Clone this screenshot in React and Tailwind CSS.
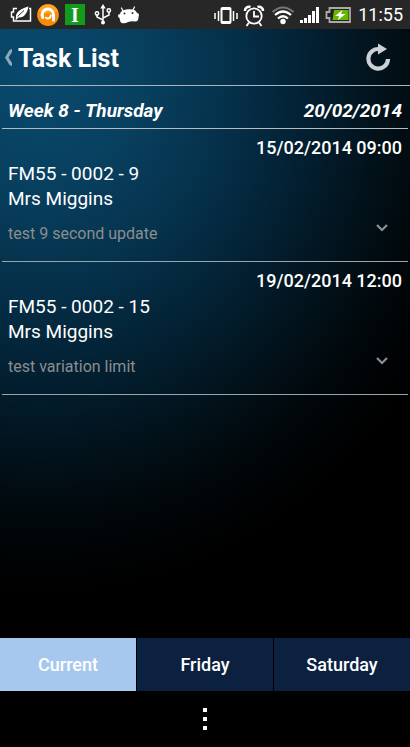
const tasks = [
  { due: "15/02/2014 09:00", ref: "FM55 - 0002 - 9", name: "Mrs Miggins", note: "test 9 second update" },
  { due: "19/02/2014 12:00", ref: "FM55 - 0002 - 15", name: "Mrs Miggins", note: "test variation limit" },
];

function StatusBar() {
  return (
    <div className="flex h-[29px] items-center justify-between bg-[#272727] pl-[9px] pr-[7px] text-white">
      <div className="flex items-center gap-[5px]">
        <svg width="23" height="22" viewBox="0 0 23 22" aria-hidden="true">
          <path d="M8 4.500H4.500V8H2.500V13H4.500V17H21.500V4.500H20" fill="none" stroke="currentColor" strokeWidth="1.500" />
          <path d="M7 13.500C6.500 9 10 5 19.500 2.500C18.500 9 15 14 9.500 13.500L6.500 16.500Z" fill="currentColor" />
          <path d="M8.500 12.500L15 6.500" stroke="#272727" strokeWidth="1" />
        </svg>
        <svg width="22" height="24" viewBox="0 0 22 24" aria-hidden="true">
          <circle cx="11" cy="12" r="10.900" fill="#f98a08" />
          <path d="M1 8A10.900 10.900 0 0 1 21 8Q11 13 1 8Z" fill="#ffa322" />
          <path d="M5.800 14.500A5.700 5.700 0 1 1 16.500 11.500V17" fill="none" stroke="#fff" strokeWidth="3" strokeLinecap="round" />
          <path d="M9 14.800A3 3 0 0 0 13.800 12.500" stroke="#fff" strokeWidth="2" fill="none" strokeLinecap="round" />
        </svg>
        <span className="ml-px flex h-[21px] w-5 items-center justify-center bg-[#159b1c] font-['Liberation_Serif',serif] text-xl leading-5 font-bold">I</span>
        <svg className="ml-1" width="18" height="22" viewBox="0 0 18 22" aria-hidden="true" fill="none" stroke="currentColor" strokeWidth="1.500">
          <path d="M9 4V18M9 16L3 13V10M9 14L15 11V7.500" />
          <path d="M9 0L6.300 4.500H11.700Z" fill="currentColor" stroke="none" />
          <circle cx="9" cy="18.500" r="2" fill="currentColor" stroke="none" />
          <circle cx="3" cy="9.500" r="1.700" />
          <circle cx="14.800" cy="6.500" r="1.700" />
        </svg>
        <svg width="23" height="20" viewBox="0 0 23 20" aria-hidden="true">
          <path d="M4.500 3L6 6M17.500 2L16 5" stroke="currentColor" strokeWidth="1.200" strokeLinecap="round" />
          <path d="M3 9C4 5.500 7 4.800 11 4.300C16 4 19 5 19.800 7.800C22 8 22.500 10 21.500 12C21.500 15 20.500 16.500 18 16.500Q14 16 11 17Q8 19 4.500 18C3 17 3 15 2.500 13C0.500 12 0.500 9 3 9Z" fill="currentColor" />
          <circle cx="7.500" cy="8.500" r="1" fill="#333" />
          <circle cx="15.500" cy="8" r="1" fill="#333" />
        </svg>
      </div>
      <div className="flex items-center gap-[5px]">
        <svg width="24" height="20" viewBox="0 0 24 20" aria-hidden="true" fill="none" stroke="currentColor">
          <rect x="7.500" y="3" width="9" height="15" rx="1" strokeWidth="2" />
          <path d="M8 4H16M8 17H16" strokeWidth="2" />
          <path d="M4.500 6V16M19.500 6V16M1 8V14M23 8V14" strokeWidth="1.500" />
        </svg>
        <svg width="22" height="24" viewBox="0 0 22 24" aria-hidden="true" fill="none" stroke="currentColor" strokeWidth="1.800">
          <circle cx="11" cy="13" r="7.700" />
          <path d="M11 8V13.500H16M6 19.500L3.500 23M16 19.500L18.500 23" />
          <path d="M2 8A4 4 0 0 1 7.500 4M14.500 4A4 4 0 0 1 20 8" strokeWidth="2.500" />
        </svg>
        <svg className="ml-px" width="24" height="20" viewBox="0 0 24 20" aria-hidden="true" fill="none" stroke="currentColor" strokeWidth="2">
          <path d="M1.500 7Q12 -2 22.500 7" stroke="#777" />
          <path d="M4 10Q12 3 20 10M7 13.500Q12 9 17 13.500" strokeWidth="2.300" />
          <circle cx="12" cy="16.500" r="2.700" fill="currentColor" stroke="none" />
        </svg>
        <svg width="20" height="18" viewBox="0 0 20 18" aria-hidden="true" fill="currentColor">
          <path d="M0 14H3V17H0ZM4 12H7V17H4ZM8 9H11V17H8ZM12 5H15V17H12ZM16 1H19V17H16Z" />
        </svg>
        <svg width="26" height="18" viewBox="0 0 26 18" aria-hidden="true">
          <path d="M4.500 2H25V16H4.500V12H1.500V6H4.500Z" fill="#222" stroke="#aaa" strokeWidth="1.800" />
          <path d="M9 4H23.500V14H7.500Z" fill="#65b700" />
          <path d="M17.500 4L10 10H14L13 14L20.500 8H16Z" fill="#fff" />
        </svg>
        <span className="ml-0.5 text-lg leading-6">11:55</span>
      </div>
    </div>
  );
}

function Task({ task }) {
  return (
    <li className="mx-0.5 border-b border-[#9aa5aa] px-1.5 pt-1.5 pb-[15px]">
      <div className="text-right text-lg leading-[26px] font-medium">{task.due}</div>
      <div className="text-[19px] leading-[25px]">{task.ref}</div>
      <div className="text-[19px] leading-[25px]">{task.name}</div>
      <div className="mt-2.5 flex items-center justify-between">
        <span className="text-base leading-[25px] text-[#8b8e90]">{task.note}</span>
        <button type="button" aria-label={`Expand ${task.ref}`} className="mr-3.5 mb-3 flex h-3 w-3 items-center justify-center text-[#8a9196]">
          <svg width="12" height="8" viewBox="0 0 12 8" aria-hidden="true">
            <path d="M1 1L6 6L11 1" fill="none" stroke="currentColor" strokeWidth="2.200" />
          </svg>
        </button>
      </div>
    </li>
  );
}

export default function App() {
  return (
    <div className="flex min-h-screen flex-col bg-black font-['Roboto',sans-serif] text-white">
      <StatusBar />
      <div className="flex flex-1 flex-col bg-[radial-gradient(ellipse_460px_520px_at_40px_40px,#094a6e_0%,#08405f_22%,#05304a_42%,#032133_58%,#02121b_74%,#01070a_87%,#000_100%)]">
        <header className="flex h-[57px] items-center justify-between border-b border-[#a9b5be] pr-[18px] pl-1">
          <div className="flex items-center gap-1.5">
            <button type="button" aria-label="Back" className="text-[#8fa9ba]">
              <svg width="8" height="17" viewBox="0 0 8 17" aria-hidden="true">
                <path d="M8 0V3L4.500 8.500L8 14V17L5.500 16L1 8.500L5.500 1Z" fill="currentColor" />
              </svg>
            </button>
            <h1 className="pt-1 text-[25px] leading-8 font-bold">Task List</h1>
          </div>
          <button type="button" aria-label="Refresh" className="text-[#cdd0d5]">
            <svg width="28" height="28" viewBox="0 0 28 28" aria-hidden="true">
              <path d="M16 6.200A9.800 9.800 0 1 0 24 16" fill="none" stroke="currentColor" strokeWidth="4.200" />
              <path d="M14 0.500L23 6L14 11.500Z" fill="currentColor" />
            </svg>
          </button>
        </header>
        <div className="mx-0.5 flex h-[43px] items-center justify-between border-b border-[#b3bcc2] px-1.5 pt-2 text-[19px] font-bold italic">
          <h2>Week 8 - Thursday</h2>
          <span>20/02/2014</span>
        </div>
        <ul>
          {tasks.map((task) => (
            <Task key={task.ref} task={task} />
          ))}
        </ul>
      </div>
      <nav className="grid h-[53px] grid-cols-3 gap-px text-lg font-medium">
        <button type="button" aria-current="page" className="bg-[#a6c8ef]">Current</button>
        <button type="button" className="bg-[#0c213f]">Friday</button>
        <button type="button" className="bg-[#0c213f]">Saturday</button>
      </nav>
      <div className="flex h-14 items-center justify-center">
        <button type="button" aria-label="Menu" className="flex flex-col gap-[5px]">
          <span className="h-1 w-1 bg-white" />
          <span className="h-1 w-1 bg-white" />
          <span className="h-1 w-1 bg-white" />
        </button>
      </div>
    </div>
  );
}
